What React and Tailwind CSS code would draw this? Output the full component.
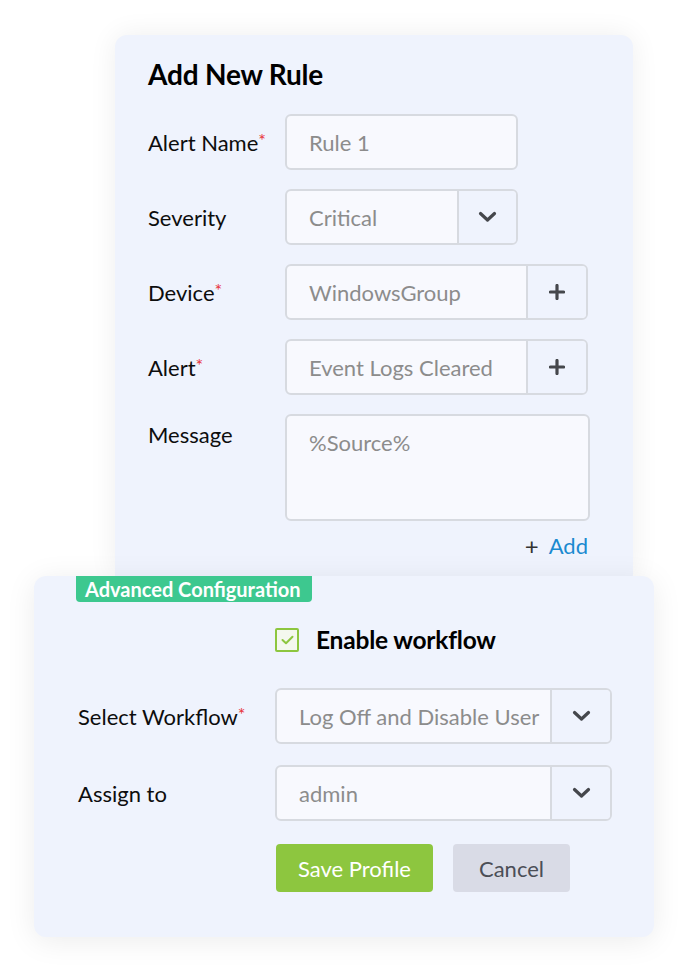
import React from "react";

const Chevron = () => (
  <svg width="19" height="12" viewBox="0 0 19 12" fill="none">
    <path d="M2.5 2.5 L9.5 9 L16.5 2.5" stroke="#45474c" strokeWidth="3.2" strokeLinecap="round" strokeLinejoin="round" />
  </svg>
);

const Plus = () => (
  <svg width="16" height="16" viewBox="0 0 16 16" fill="none">
    <path d="M8 1.5 V14.5 M1.5 8 H14.5" stroke="#45474c" strokeWidth="3.2" strokeLinecap="round" />
  </svg>
);

const Req = () => <span className="text-[#e8323a] align-[4px] text-[18px] leading-none">*</span>;

// campo con boton a la derecha (chevron o plus)
const Campo = ({ value, width, side, icon }) => (
  <div className={`flex h-[56px] ${width} rounded-[6px] border-2 border-[#d7dae0] bg-[#f8f9fe] overflow-hidden`}>
    <div className="flex-1 flex items-center pl-[22px] text-[22px] text-[#8c8c8c] whitespace-nowrap overflow-hidden">{value}</div>
    {icon ? (
      <div className={`${side} flex items-center justify-center border-l-2 border-[#d7dae0] bg-[#eff3fd]`}>
        {icon === "chevron" ? <Chevron /> : <Plus />}
      </div>
    ) : null}
  </div>
);

const Fila = ({ label, req, children, labelW }) => (
  <div className="flex items-center">
    <div className={`${labelW} text-[22px] text-[#0d0d0d] whitespace-nowrap`}>
      {label}
      {req ? <Req /> : null}
    </div>
    {children}
  </div>
);

export default function App() {
  return (
    <div className="min-h-[972px] bg-white pt-[35px] pb-[35px]" style={{ fontFamily: "Lato, 'Open Sans', sans-serif" }}>
      {/* Tarjeta superior */}
      <div className="ml-[115px] w-[518px] h-[541px] rounded-t-[12px] bg-[#eff3fd] shadow-[0_0_28px_rgba(0,0,0,0.07)] pl-[33px] pt-[21px]">
        <h1 className="text-[28px] font-bold text-black leading-[36px] tracking-[-0.2px]">Add New Rule</h1>
        <div className="mt-[22px] flex flex-col gap-[19px]">
          <Fila label="Alert Name" req labelW="w-[137px]">
            <Campo value="Rule 1" width="w-[233px]" />
          </Fila>
          <Fila label="Severity" labelW="w-[137px]">
            <Campo value="Critical" width="w-[233px]" side="w-[59px]" icon="chevron" />
          </Fila>
          <Fila label="Device" req labelW="w-[137px]">
            <Campo value="WindowsGroup" width="w-[303px]" side="w-[60px]" icon="plus" />
          </Fila>
          <Fila label="Alert" req labelW="w-[137px]">
            <Campo value="Event Logs Cleared" width="w-[303px]" side="w-[60px]" icon="plus" />
          </Fila>
          <div className="flex items-start">
            <div className="w-[137px] pt-[4px] text-[22px] text-[#0d0d0d]">Message</div>
            <div className="w-[305px] h-[107px] rounded-[6px] border-2 border-[#d7dae0] bg-[#f8f9fe] pl-[22px] pt-[10px] text-[22px] text-[#8c8c8c]">
              %Source%
            </div>
          </div>
        </div>
        <div className="w-[440px] mt-[8px] flex justify-end items-center gap-[10px] text-[22px]">
          <span className="text-[#333] text-[24px] leading-none">+</span>
          <span className="text-[#1a8ad0]">Add</span>
        </div>
      </div>

      {/* Tarjeta inferior */}
      <div className="ml-[34px] w-[620px] h-[361px] rounded-[12px] bg-[#eff3fd] shadow-[0_4px_30px_rgba(0,0,0,0.08)]">
        <div className="ml-[42px] w-[236px] h-[26px] rounded-b-[4px] bg-[#3dc88f] text-white font-bold text-[20px] leading-[26px] pl-[9px] whitespace-nowrap">
          Advanced Configuration
        </div>
        <div className="mt-[24px] ml-[241px] h-[28px] flex items-center gap-[17px]">
          <div className="w-[24px] h-[24px] border-2 border-[#8dc63f] rounded-[2px] bg-[#f4f8ee] flex items-center justify-center">
            <svg width="13" height="10" viewBox="0 0 13 10" fill="none">
              <path d="M1.5 5 L5 8.3 L11.5 1.8" stroke="#8dc63f" strokeWidth="2" strokeLinecap="round" strokeLinejoin="round" />
            </svg>
          </div>
          <span className="text-[24.5px] leading-[28px] font-bold text-black tracking-[-0.2px]">Enable workflow</span>
        </div>
        <div className="mt-[34px] ml-[44px] flex flex-col gap-[21px]">
          <Fila label="Select Workflow" req labelW="w-[197px]">
            <Campo value="Log Off and Disable User" width="w-[337px]" side="w-[60px]" icon="chevron" />
          </Fila>
          <Fila label="Assign to" labelW="w-[197px]">
            <Campo value="admin" width="w-[337px]" side="w-[60px]" icon="chevron" />
          </Fila>
        </div>
        <div className="mt-[23px] ml-[242px] flex gap-[20px]">
          <button className="w-[157px] h-[48px] rounded-[4px] bg-[#8dc63f] text-white text-[22px]">Save Profile</button>
          <button className="w-[117px] h-[48px] rounded-[4px] bg-[#d9dbe6] text-[#4b4e56] text-[22px]">Cancel</button>
        </div>
      </div>
    </div>
  );
}
